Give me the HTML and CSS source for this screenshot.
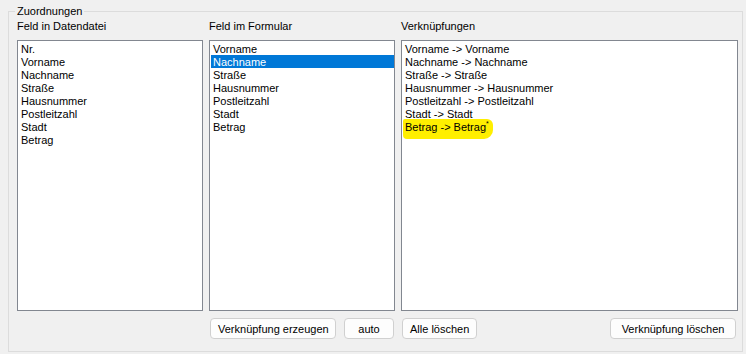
FILE: index.html
```html
<!DOCTYPE html>
<html lang="de">
<head>
  <meta charset="UTF-8" />
  <title>Zuordnungen</title>
  <link rel="stylesheet" href="styles.css">
</head>
<body>

  <div class="group">
    <div class="group__legend">Zuordnungen</div>

    <div class="group__grid">
      <!-- Column captions -->
      <div class="col-label">Feld in Datendatei</div>
      <div class="col-label">Feld im Formular</div>
      <div class="col-label">Verknüpfungen</div>

      <!-- Source fields -->
      <ul class="listbox">
        <li>Nr.</li>
        <li>Vorname</li>
        <li>Nachname</li>
        <li>Straße</li>
        <li>Hausnummer</li>
        <li>Postleitzahl</li>
        <li>Stadt</li>
        <li>Betrag</li>
      </ul>

      <!-- Form fields -->
      <ul class="listbox">
        <li>Vorname</li>
        <li class="selected">Nachname</li>
        <li>Straße</li>
        <li>Hausnummer</li>
        <li>Postleitzahl</li>
        <li>Stadt</li>
        <li>Betrag</li>
      </ul>

      <!-- Links -->
      <ul class="listbox">
        <li>Vorname -&gt; Vorname</li>
        <li>Nachname -&gt; Nachname</li>
        <li>Straße -&gt; Straße</li>
        <li>Hausnummer -&gt; Hausnummer</li>
        <li>Postleitzahl -&gt; Postleitzahl</li>
        <li>Stadt -&gt; Stadt</li>
        <li><span class="marker">Betrag -&gt; Betrag<sup>*</sup></span></li>
      </ul>

      <div></div>
      <div class="button-row button-row--mid">
        <button class="btn btn--wide">Verknüpfung erzeugen</button>
        <button class="btn">auto</button>
      </div>
      <div class="button-row button-row--right">
        <button class="btn">Alle löschen</button>
        <button class="btn btn--wide">Verknüpfung löschen</button>
      </div>
    </div>
  </div>

</body>
</html>
```

FILE: styles.css
```css
* {
  box-sizing: border-box;
}

body {
  margin: 0;
  background-color: #f0f0f0;
  font-family: "Liberation Sans", Arial, sans-serif;
  font-size: 11px;
  color: #000;
}

/* Group box with caption on the border */
.group {
  position: relative;
  margin: 11px 0 0 8px;
  width: 735px;
  height: 341px;
  border: 1px solid #dcdcdc;
  padding: 7px 0 6px 8px;
}

.group__legend {
  position: absolute;
  top: -8px;
  left: 6px;
  padding: 0 2px;
  line-height: 15px;
  background-color: #f0f0f0;
}

.group__grid {
  display: grid;
  grid-template-columns: 186px 186px 337px;
  grid-template-rows: 15px 277px 21px;
  column-gap: 6px;
  row-gap: 0;
}

.col-label {
  line-height: 15px;
  white-space: nowrap;
}

/* List boxes */
.listbox {
  margin: 6px 0 0 0;
  padding: 1px 0 0 1px;
  list-style: none;
  background-color: #fff;
  border: 1px solid #828790;
  overflow: hidden;
}

.listbox li {
  height: 13px;
  line-height: 14px;
  padding-left: 2px;
  white-space: nowrap;
}

.listbox li.selected {
  background-color: #0078d7;
  color: #fff;
}

/* Yellow marker stroke over the last link */
.marker {
  background-color: #ffef00;
  padding: 2px 4px 6px 2px;
  margin-left: -2px;
  border-radius: 2px 6px 9px 4px;
}

.marker sup {
  font-size: 7px;
  line-height: 0;
}

/* Buttons */
.button-row {
  display: flex;
  justify-content: space-between;
  margin-top: 7px;
  height: 21px;
}

.button-row--mid {
  padding: 0 1px 0 1px;
}

.button-row--right {
  padding: 0 2px 0 1px;
}

.btn {
  height: 21px;
  min-width: 50px;
  padding: 0 7px;
  font-family: inherit;
  font-size: 11px;
  color: #000;
  white-space: nowrap;
  background-color: #fdfdfd;
  border: 1px solid #d0d0d0;
  border-radius: 4px;
}

.btn--wide {
  width: 126px;
}
```
